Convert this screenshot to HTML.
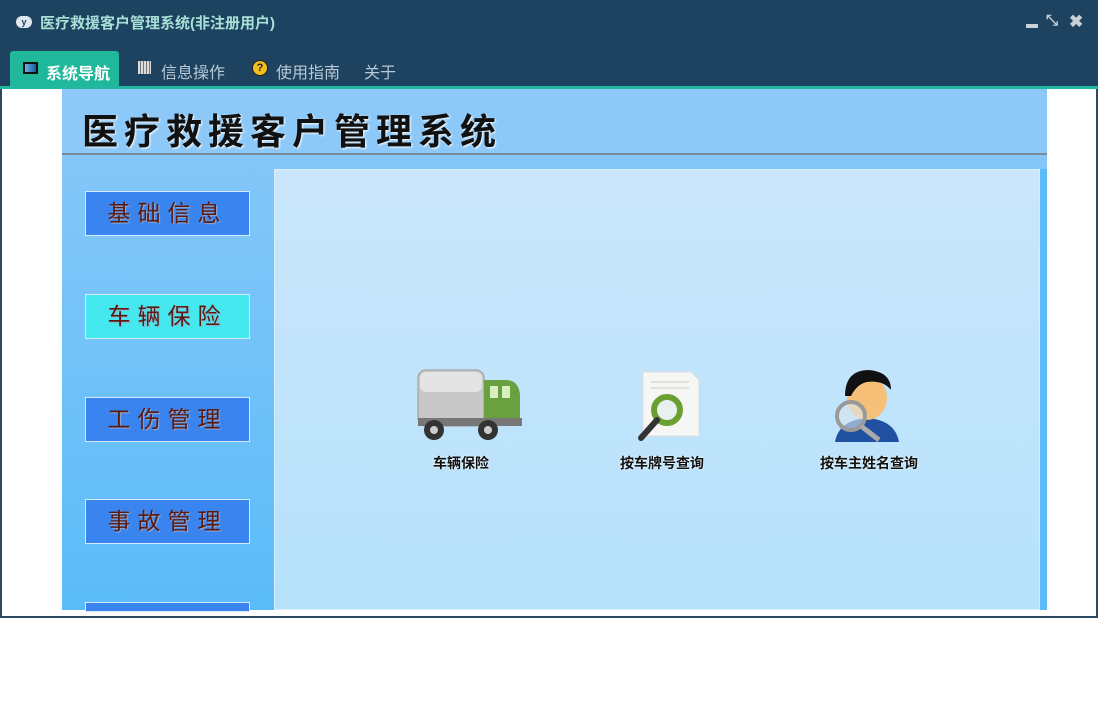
<!DOCTYPE html>
<html><head><meta charset="utf-8"><style>
*{margin:0;padding:0;box-sizing:border-box}
body{width:1098px;height:728px;background:#fff;position:relative;overflow:hidden;font-family:"Liberation Sans","Noto Sans CJK SC",sans-serif}
.win{position:absolute;left:0;top:0;width:1098px;height:618px;border:2px solid #2a4a63;border-top:none;background:#fff}
.tb{position:absolute;left:-2px;top:0;width:1098px;height:87px;background:#1e4360}
.title{position:absolute;left:40px;top:12px;color:#a8e0d8;font-size:15px;font-weight:bold}
.logo{position:absolute;left:16px;top:16px;width:16px;height:12px;background:#dfe8f0;border-radius:6px;color:#1e4360;font-size:9px;font-weight:bold;text-align:center;line-height:12px}
.teal{position:absolute;left:-2px;top:86px;width:1098px;height:3px;background:#22b8a0}
.tab{position:absolute;top:59px;color:#b8c8d4;font-size:16px}
.tabsel{position:absolute;left:10px;top:51px;width:109px;height:36px;background:#1fb89a;border-radius:3px 3px 0 0;color:#fff;font-size:16px;font-weight:bold}
.panel{position:absolute;left:60px;top:89px;width:985px;height:521px;background:linear-gradient(#8ac8f8,#5bbcf8)}
.hdr{position:absolute;left:0;top:0;width:985px;height:66px;background:#8cc8f8;border-bottom:2px solid #7a8a9a}
.hdr span{position:absolute;left:20px;top:14px;font-size:36px;font-weight:bold;color:#111;letter-spacing:6px;text-shadow:1px 1px 2px #fff}
.btn{position:absolute;left:23px;width:165px;height:45px;background:#3a84f0;border:1px solid #d8e8ff;color:#5a1a10;font-size:23px;text-align:center;line-height:43px;letter-spacing:7px;text-shadow:1px 1px 1px #9ac}
.content{position:absolute;left:212px;top:80px;width:766px;height:441px;background:linear-gradient(#cae6fb,#b6e2fb);border:1px solid #d8eefc}
.lbl{position:absolute;top:283px;font-size:14px;font-weight:bold;color:#111;text-shadow:0 0 2px #fff}
</style></head><body>
<div class="win">
<div class="tb">
<div class="logo">y</div>
<div class="title">医疗救援客户管理系统(非注册用户)</div>
<div style="position:absolute;left:1026px;top:24px;width:12px;height:4px;background:#c8d0d8"></div>
<div style="position:absolute;left:1046px;top:12px;color:#c8d0d8;font-size:15px;font-weight:bold">⤡</div>
<div style="position:absolute;left:1069px;top:12px;color:#c8d0d8;font-size:17px;font-weight:bold">✖</div>
<div class="tabsel"><span style="position:absolute;left:13px;top:11px;width:15px;height:12px;border:2px solid #111;background:linear-gradient(90deg,#6ab0e8,#1e5c9a)"></span><span style="position:absolute;left:36px;top:9px">系统导航</span></div>
<div class="tab" style="left:138px;top:61px;width:13px;height:13px;background:repeating-linear-gradient(90deg,#ddd 0 2px,#777 2px 3px)"></div>
<div class="tab" style="left:161px">信息操作</div>
<div class="tab" style="left:252px;top:60px;width:16px;height:16px;border-radius:50%;background:#f0c020;border:1px solid #222;color:#222;font-size:11px;font-weight:bold;text-align:center;line-height:14px">?</div>
<div class="tab" style="left:276px">使用指南</div>
<div class="tab" style="left:364px">关于</div>
</div>
<div class="teal"></div>
<div class="panel">
<div class="hdr"><span>医疗救援客户管理系统</span></div>
<div class="btn" style="top:102px">基础信息</div>
<div class="btn" style="top:205px;background:#44e8ee">车辆保险</div>
<div class="btn" style="top:308px">工伤管理</div>
<div class="btn" style="top:410px">事故管理</div>
<div class="btn" style="top:513px;height:10px"></div>
<div style="position:absolute;left:978px;top:80px;width:7px;height:441px;background:#5bbcf8"></div>
<div class="content">
<svg style="position:absolute;left:141px;top:198px" width="108" height="76">
<rect x="2" y="2" width="66" height="56" rx="8" fill="#c8c8c8" stroke="#999"/>
<rect x="4" y="4" width="62" height="20" rx="6" fill="#e4e4e4"/>
<path d="M68 12h22q12 0 14 14v30h-36z" fill="#6aa040"/>
<rect x="74" y="18" width="8" height="12" fill="#d8f0c0"/><rect x="86" y="18" width="8" height="12" fill="#d8f0c0"/>
<rect x="2" y="50" width="104" height="8" fill="#777"/>
<circle cx="18" cy="62" r="10" fill="#333"/><circle cx="18" cy="62" r="4" fill="#ccc"/>
<circle cx="72" cy="62" r="10" fill="#333"/><circle cx="72" cy="62" r="4" fill="#ccc"/>
</svg>
<svg style="position:absolute;left:358px;top:198px" width="70" height="76">
<path d="M10 4h48l8 8v56h-56z" fill="#f6f6f4" stroke="#ddd"/>
<line x1="18" y1="14" x2="56" y2="14" stroke="#ccc"/><line x1="18" y1="20" x2="56" y2="20" stroke="#ccc"/>
<circle cx="34" cy="42" r="13" fill="#e8f0f0" stroke="#6aa030" stroke-width="6"/>
<line x1="24" y1="52" x2="8" y2="70" stroke="#333" stroke-width="6" stroke-linecap="round"/>
</svg>
<svg style="position:absolute;left:552px;top:198px" width="80" height="76">
<path d="M8 74q4-22 32-24q28 2 32 24z" fill="#2050a0"/>
<ellipse cx="40" cy="30" rx="20" ry="22" fill="#f6c078"/>
<path d="M18 28q0-26 24-26q22 2 22 20q-8-10-24-8q-10 2-16 14z" fill="#111"/>
<circle cx="24" cy="48" r="14" fill="rgba(220,230,240,.6)" stroke="#999" stroke-width="4"/>
<line x1="34" y1="58" x2="52" y2="72" stroke="#aaa" stroke-width="5"/>
</svg>
<div class="lbl" style="left:158px">车辆保险</div>
<div class="lbl" style="left:345px">按车牌号查询</div>
<div class="lbl" style="left:545px">按车主姓名查询</div>
</div>
</div>
</div>
</body></html>
